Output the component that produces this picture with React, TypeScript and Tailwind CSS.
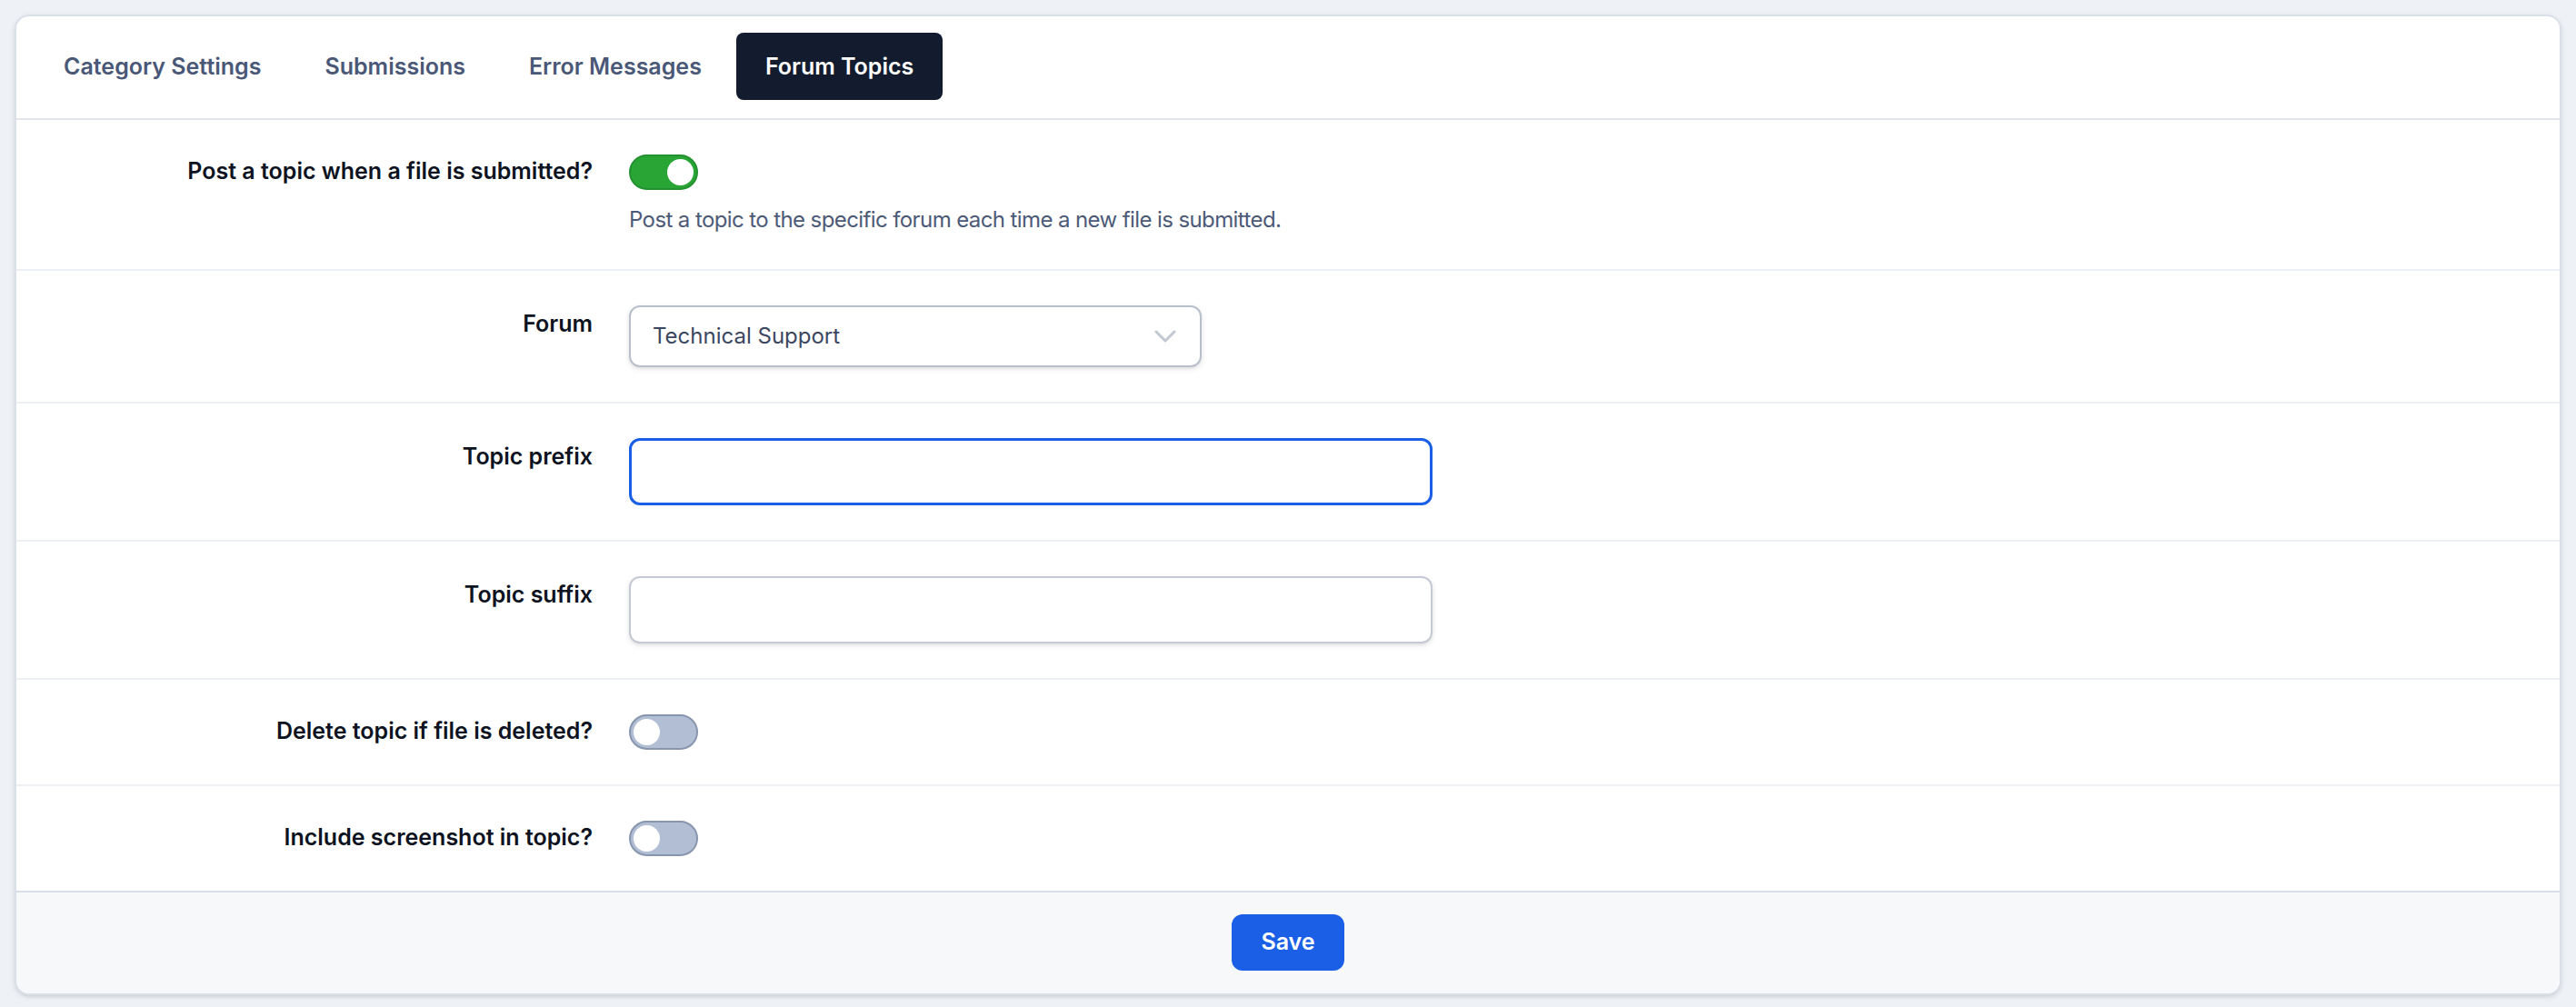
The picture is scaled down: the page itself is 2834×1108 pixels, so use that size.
import clsx from "clsx"

const tabs = ["Category Settings", "Submissions", "Error Messages", "Forum Topics"]

function Toggle({ on }: { on: boolean }) {
  return (
    <button
      type="button"
      role="switch"
      aria-checked={on}
      className={clsx(
        "flex h-[19.5px] w-[38px] items-center rounded-full border px-[1.5px]",
        on ? "justify-end border-[#23912f] bg-[#28a535]" : "justify-start border-[#8895ae] bg-[#b1bed3]"
      )}
    >
      <span className="h-[14.5px] w-[14.5px] rounded-full bg-white" />
    </button>
  )
}

function Row({ label, top = "pt-0.5", children }: { label: string; top?: string; children: React.ReactNode }) {
  return (
    <div className="grid grid-cols-[301px_1fr] gap-x-5 px-4 py-[19px]">
      <label className={clsx("text-right text-[12.5px] font-semibold leading-4 text-[#0d1321]", top)}>{label}</label>
      <div>{children}</div>
    </div>
  )
}

export default function App() {
  return (
    <div className="min-h-screen bg-[#eef1f6] font-['Inter',sans-serif]">
      <div className="[zoom:2] p-2">
        <div className="overflow-hidden rounded-lg border border-[#dbe0e8] bg-white shadow-sm">
          {/* Tabs */}
          <nav className="flex gap-[3px] border-b border-[#e3e7ed] px-2.5 pt-[9px] pb-[10px]">
            {tabs.map((t) => (
              <button
                key={t}
                type="button"
                className={clsx(
                  "h-[37px] rounded px-4 text-[12.5px] font-semibold leading-5",
                  t === "Forum Topics" ? "bg-[#131c2f] text-white" : "text-[#4a5878]"
                )}
              >
                {t}
              </button>
            ))}
          </nav>

          <div className="divide-y divide-[#eceff3]">
            <Row label="Post a topic when a file is submitted?" top="pt-px">
              <Toggle on />
              <p className="mt-[8.5px] text-[12px] leading-4 tracking-[-0.025em] text-[#4c5a77]">
                Post a topic to the specific forum each time a new file is submitted.
              </p>
            </Row>

            <Row label="Forum">
              <div className="flex h-[34px] w-[315px] items-center justify-between rounded-md border border-[#b9c0cc] bg-white pr-[13px] pl-3 shadow-sm">
                <span className="text-[12px] text-[#3b4760]">Technical Support</span>
                <svg width="12" height="7" viewBox="0 0 12 7" fill="none">
                  <path d="M1 1l5 5 5-5" stroke="#c2c8d1" strokeWidth="1.5" strokeLinecap="round" strokeLinejoin="round" />
                </svg>
              </div>
            </Row>

            <Row label="Topic prefix">
              <input
                type="text"
                className="h-[37px] w-[442px] rounded-md border-[1.5px] border-[#1b5fe6] bg-white px-3 text-[12px] outline-none"
              />
            </Row>

            <Row label="Topic suffix">
              <input
                type="text"
                className="h-[37px] w-[442px] rounded-md border border-[#c4c9d3] bg-white px-3 text-[12px] shadow-sm outline-none"
              />
            </Row>

            <Row label="Delete topic if file is deleted?" top="pt-px">
              <Toggle on={false} />
            </Row>

            <Row label="Include screenshot in topic?" top="pt-px">
              <Toggle on={false} />
            </Row>
          </div>

          {/* Footer */}
          <div className="flex justify-center border-t border-[#d9dfe8] bg-[#f7f8fa] pt-3 pb-[12.5px]">
            <button type="button" className="h-[31px] rounded-md bg-[#1b5fe6] px-4 text-[12.5px] font-semibold text-white">
              Save
            </button>
          </div>
        </div>
      </div>
    </div>
  )
}
